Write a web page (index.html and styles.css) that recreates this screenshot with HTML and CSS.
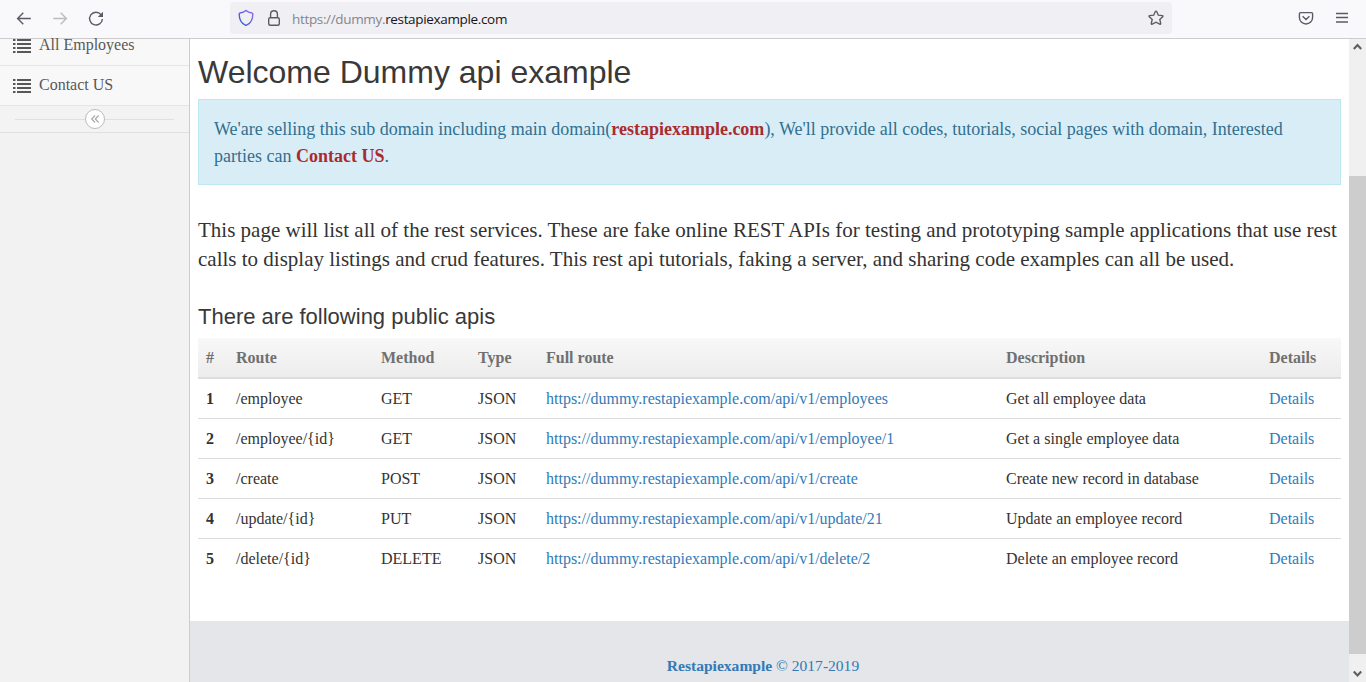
FILE: index.html
```html
<!DOCTYPE html>
<html lang="en">
<head>
<meta charset="utf-8">
<title>Dummy api example</title>
<link rel="stylesheet" href="styles.css">
</head>
<body>
<header class="toolbar">
  <nav class="nav-buttons">
    <svg width="16" height="16" viewBox="0 0 16 16"><path d="M14.800 7.500H2M7.300 1.800L1.600 7.500l5.700 5.700"/></svg>
    <svg class="muted" width="16" height="16" viewBox="0 0 16 16"><path d="M1.200 7.500H14M8.700 1.800L14.400 7.500l-5.700 5.700"/></svg>
    <svg width="16" height="16" viewBox="0 0 16 16"><path d="M13 3.600A6.400 6.400 0 1 0 14.400 8"/><path class="solid" d="M15 .8V6H9.800z"/></svg>
  </nav>
  <div class="address">
    <svg class="shield" width="16" height="18" viewBox="0 0 16 18"><defs><linearGradient id="sg" x1="0" y1="1" x2="1" y2="0"><stop offset="0" stop-color="#2858d0"/><stop offset="1" stop-color="#966af5"/></linearGradient></defs><path stroke="url(#sg)" d="M8 1.600C6.500 3.100 4 3.900 2 4c-.5 0-.8.4-.8.9 0 5.200 1.800 9.200 6.300 11.300.4.2.7.2 1 0 4.500-2.100 6.300-6.100 6.300-11.300 0-.5-.3-.9-.8-.9-2-.1-4.500-.9-6-2.400z"/></svg>
    <svg class="lock" width="14" height="18" viewBox="0 0 14 18"><rect x="1.700" y="8.700" width="10.600" height="7.600" rx="1.500"/><path d="M3.600 8.500V5.100a3.400 3.400 0 0 1 6.800 0v3.400"/></svg>
    <span class="url">https://dummy.<b>restapiexample.com</b></span>
    <svg class="star" width="18" height="18" viewBox="0 0 18 18"><path d="M9 2.100q.5 0 .7.500l1.600 3.600 4 .4q1.200.3.400 1.200l-2.900 2.600.9 4q0 1.100-1 .7L9 13.200l-3.700 1.900q-1 .4-1-.7l.9-4-2.900-2.600q-.8-.9.4-1.200l4-.4 1.600-3.600q.2-.5.7-.5z"/></svg>
  </div>
  <div class="actions">
    <svg width="16" height="16" viewBox="0 0 16 16"><path d="M2.600 2.600h10.800q1.200 0 1.200 1.200v3.600a6.600 6.600 0 0 1-13.200 0V3.800q0-1.200 1.200-1.200zM4.600 6.300L8 9.500l3.400-3.200"/></svg>
    <svg width="14" height="16" viewBox="0 0 14 16"><path d="M0 3.500h12M0 7.500h12M0 12h12"/></svg>
  </div>
</header>
<div class="viewport">
  <aside class="sidebar">
    <a class="item"><svg width="18" height="14" viewBox="0 0 18 14"><path d="M0 1h2.500M4 1h14M0 5h2.500M4 5h14M0 9h2.500M4 9h14M0 13h2.500M4 13h14"/></svg>All Employees</a>
    <a class="item"><svg width="18" height="14" viewBox="0 0 18 14"><path d="M0 1h2.500M4 1h14M0 5h2.500M4 5h14M0 9h2.500M4 9h14M0 13h2.500M4 13h14"/></svg>Contact US</a>
    <div class="collapse"><span class="knob"><svg width="10" height="10" viewBox="0 0 10 10"><path d="M5 1.500L1.700 5 5 8.500M8.600 1.500L5.300 5l3.300 3.500"/></svg></span></div>
  </aside>
  <div class="content">
    <main>
      <h1>Welcome Dummy api example</h1>
      <div class="alert">We'are selling this sub domain including main domain(<b>restapiexample.com</b>), We'll provide all codes, tutorials, social pages with domain, Interested<br>parties can <b>Contact US</b>.</div>
      <p class="lead">This page will list all of the rest services. These are fake online REST APIs for testing and prototyping sample applications that use rest<br>calls to display listings and crud features. This rest api tutorials, faking a server, and sharing code examples can all be used.</p>
      <h2>There are following public apis</h2>
      <table>
        <colgroup><col class="c-num"><col class="c-route"><col class="c-method"><col class="c-type"><col class="c-full"><col class="c-desc"><col></colgroup>
        <thead><tr><th>#</th><th>Route</th><th>Method</th><th>Type</th><th>Full route</th><th>Description</th><th>Details</th></tr></thead>
        <tbody>
          <tr><th>1</th><td>/employee</td><td>GET</td><td>JSON</td><td><a>https://dummy.restapiexample.com/api/v1/employees</a></td><td>Get all employee data</td><td><a>Details</a></td></tr>
          <tr><th>2</th><td>/employee/{id}</td><td>GET</td><td>JSON</td><td><a>https://dummy.restapiexample.com/api/v1/employee/1</a></td><td>Get a single employee data</td><td><a>Details</a></td></tr>
          <tr><th>3</th><td>/create</td><td>POST</td><td>JSON</td><td><a>https://dummy.restapiexample.com/api/v1/create</a></td><td>Create new record in database</td><td><a>Details</a></td></tr>
          <tr><th>4</th><td>/update/{id}</td><td>PUT</td><td>JSON</td><td><a>https://dummy.restapiexample.com/api/v1/update/21</a></td><td>Update an employee record</td><td><a>Details</a></td></tr>
          <tr><th>5</th><td>/delete/{id}</td><td>DELETE</td><td>JSON</td><td><a>https://dummy.restapiexample.com/api/v1/delete/2</a></td><td>Delete an employee record</td><td><a>Details</a></td></tr>
        </tbody>
      </table>
    </main>
    <footer><hr><a><b>Restapiexample</b> © 2017-2019</a></footer>
  </div>
  <div class="scrollbar">
    <svg width="17" height="17" viewBox="0 0 17 17"><path d="M4.800 10l3.700-3.900 3.700 3.900"/></svg>
    <div class="thumb"></div>
    <svg width="17" height="17" viewBox="0 0 17 17"><path d="M4.800 6.500l3.700 3.900 3.700-3.900"/></svg>
  </div>
</div>
</body>
</html>
```
FILE: styles.css
```css
* { box-sizing: border-box; }
body {
  margin: 0;
  height: 682px;
  overflow: hidden;
  display: flex;
  flex-direction: column;
  font: 16px/1.42857 "Liberation Serif", serif;
  color: #333;
  background: #fff;
}
svg { display: block; flex: none; fill: none; stroke: #5b5b66; stroke-width: 1.4; }
b, th { font-weight: bold; }

.toolbar {
  height: 39px;
  flex: none;
  display: flex;
  background: #f9f9fb;
  border-bottom: 1px solid #ccc;
}
.nav-buttons { width: 230px; padding: 11px 0 0 16px; display: flex; gap: 20px; }
.nav-buttons .muted { stroke: #bcbcc1; }
.nav-buttons .solid { fill: #5b5b66; stroke: none; }
.address {
  width: 942px;
  height: 32px;
  margin-top: 2px;
  padding: 0 7px 0 8px;
  display: flex;
  align-items: center;
  background: #f0f0f4;
  border-radius: 4px;
}
.lock { margin-left: 13px; }
.url {
  flex: 1;
  margin-left: 11px;
  padding-top: 2px;
  font: 13.500px/18px "Open Sans", sans-serif;
  letter-spacing: -0.34px;
  color: #85858c;
}
.url b { font-weight: 400; color: #15141a; }
.actions { display: flex; gap: 22px; padding: 10px 0 0 126px; }

.viewport { flex: 1; min-height: 0; display: flex; }
.sidebar {
  width: 190px;
  flex: none;
  background: #f2f2f2;
  border-right: 1px solid #ccc;
}
.item {
  display: flex;
  align-items: center;
  gap: 8px;
  height: 40px;
  padding-left: 13px;
  color: #585858;
  background: #f8f8f8;
  border-bottom: 1px solid #e5e5e5;
}
.item:first-child { height: 27px; padding-bottom: 13px; }
.item svg { stroke: #585858; stroke-width: 2.2; }
.collapse {
  height: 27px;
  display: flex;
  align-items: center;
  padding: 0 15px;
  background: #f3f3f3;
  border-bottom: 1px solid #e0e0e0;
}
.collapse::before, .collapse::after { content: ""; flex: 1; height: 1px; background: #e0e0e0; }
.knob {
  width: 20px;
  height: 20px;
  display: grid;
  place-items: center;
  background: #fff;
  border: 1px solid #bbb;
  border-radius: 50%;
}
.knob svg { stroke: #aaa; stroke-width: 1.2; }

.content { flex: 1; min-width: 0; display: flex; flex-direction: column; }
main { height: 582px; flex: none; padding: 13px 8px 0; }
h1, h2 { margin: 0; font-family: "Liberation Sans", sans-serif; font-weight: 400; color: #393939; }
h1 { font-size: 32px; line-height: 40px; }
h2 { font-size: 22px; line-height: 24px; margin-top: 31px; }
.alert {
  margin-top: 7px;
  height: 86px;
  padding: 16px 15px;
  font-size: 18px;
  line-height: 27px;
  white-space: nowrap;
  color: #31708f;
  background: #d9edf7;
  border: 1px solid #bce8f1;
}
.alert b { color: #a92b2e; }
.lead { margin: 31px 0 0; font-size: 21px; line-height: 29px; white-space: nowrap; }
table {
  width: 1143px;
  margin-top: 9px;
  table-layout: fixed;
  border-collapse: collapse;
}
.c-num { width: 30px; }
.c-route { width: 145px; }
.c-method { width: 97px; }
.c-type { width: 68px; }
.c-full { width: 460px; }
.c-desc { width: 263px; }
th, td { padding: 9px 8px 7.080px; text-align: left; white-space: nowrap; border-top: 1px solid #ddd; }
thead tr { background: linear-gradient(#f8f8f8, #ececec); color: #707070; }
thead th { border-top: 0; border-bottom: 2px solid #ddd; }
a { color: #337ab7; }

footer { flex: 1; padding: 16px 12px 0 8px; background: #e4e6e9; text-align: center; }
footer hr { margin: 0 0 17px; border: 0; border-top: 1px solid #e5e5e5; }
footer a { padding-right: 9px; font-size: 15.550px; }

.scrollbar {
  width: 17px;
  flex: none;
  display: flex;
  flex-direction: column;
  background: #f0f0f0;
}
.scrollbar svg { stroke: #606060; stroke-width: 2.2; }
.scrollbar .thumb { height: 478px; margin: 120px 0 11px; background: #cdcdcd; }
```
